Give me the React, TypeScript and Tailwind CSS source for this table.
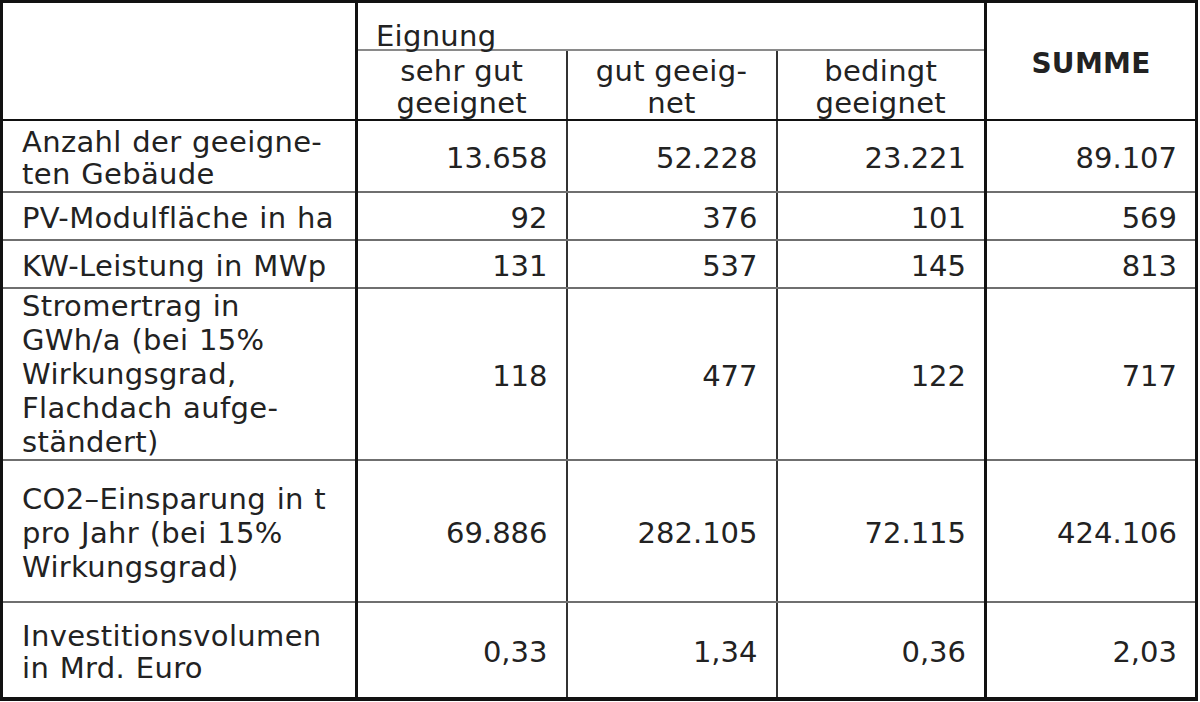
import React from 'react';

interface DataRow {
  label: React.ReactNode;
  values: string[];
  total: string;
  height: string;
  leading: string;
  pad: string;
}

const rows: DataRow[] = [
  {
    label: (
      <>
        Anzahl der geeigne-
        <br />
        ten Gebäude
      </>
    ),
    values: ['13.658', '52.228', '23.221'],
    total: '89.107',
    height: 'h-[72px]',
    leading: 'leading-[32px]',
    pad: 'pt-[5px]',
  },
  {
    label: 'PV-Modulfläche in ha',
    values: ['92', '376', '101'],
    total: '569',
    height: 'h-[48px]',
    leading: 'leading-[32px]',
    pad: 'pt-[5px]',
  },
  {
    label: 'KW-Leistung in MWp',
    values: ['131', '537', '145'],
    total: '813',
    height: 'h-[48px]',
    leading: 'leading-[32px]',
    pad: 'pt-[5px]',
  },
  {
    label: (
      <>
        Stromertrag in
        <br />
        GWh/a (bei 15%
        <br />
        Wirkungsgrad,
        <br />
        Flachdach aufge-
        <br />
        ständert)
      </>
    ),
    values: ['118', '477', '122'],
    total: '717',
    height: 'h-[172px]',
    leading: 'leading-[34px]',
    pad: 'pt-0',
  },
  {
    label: (
      <>
        CO2–Einsparung in t
        <br />
        pro Jahr (bei 15%
        <br />
        Wirkungsgrad)
      </>
    ),
    values: ['69.886', '282.105', '72.115'],
    total: '424.106',
    height: 'h-[142px]',
    leading: 'leading-[34px]',
    pad: 'pt-[5px]',
  },
  {
    label: (
      <>
        Investitionsvolumen
        <br />
        in Mrd. Euro
      </>
    ),
    values: ['0,33', '1,34', '0,36'],
    total: '2,03',
    height: 'h-[97px]',
    leading: 'leading-[32px]',
    pad: 'pt-[5px]',
  },
];

export default function App() {
  return (
    <div className="w-[1200px] h-[702px] bg-white overflow-hidden">
      <table className="w-[1198px] table-fixed border-collapse border-[3px] border-b-4 border-[#111] text-[29px] text-[#222] font-['DejaVu_Sans',Verdana,sans-serif]">
        <colgroup>
          <col className="w-[355px]" />
          <col className="w-[210px]" />
          <col className="w-[210px]" />
          <col className="w-[209px]" />
          <col />
        </colgroup>
        <thead>
          <tr className="h-[48px]">
            <th rowSpan={2} className="border-r-[3px] border-b-2 border-r-[#111] border-b-[#111]"></th>
            <th
              colSpan={3}
              className="border-b-2 border-b-[#8a8a8a] pl-[18px] pb-0 text-left align-bottom font-normal leading-[26px] tracking-[0.3px]"
            >
              Eignung
            </th>
            <th
              rowSpan={2}
              className="border-l-[3px] border-b-2 border-l-[#111] border-b-[#111] text-center align-middle font-bold text-[28px] leading-[32px] pt-[6px] tracking-[0.3px]"
            >
              SUMME
            </th>
          </tr>
          <tr className="h-[70px]">
            <th className="border-r-2 border-b-2 border-r-[#333] border-b-[#111] text-center align-middle font-normal leading-[32px] pt-[4px] tracking-[0.3px]">
              sehr gut
              <br />
              geeignet
            </th>
            <th className="border-r-2 border-b-2 border-r-[#333] border-b-[#111] text-center align-middle font-normal leading-[32px] pt-[4px] tracking-[0.3px]">
              gut geeig-
              <br />
              net
            </th>
            <th className="border-b-2 border-b-[#111] text-center align-middle font-normal leading-[32px] pt-[4px] tracking-[0.3px]">
              bedingt
              <br />
              geeignet
            </th>
          </tr>
        </thead>
        <tbody>
          {rows.map((row, i) => (
            <tr key={i} className={row.height}>
              <td
                className={`border-r-[3px] border-b-2 border-r-[#111] border-b-[#6f6f6f] pl-[19px] pr-1 align-middle whitespace-nowrap tracking-[0.35px] [word-spacing:1px] ${row.pad} ${row.leading}`}
              >
                {row.label}
              </td>
              {row.values.map((v, j) => (
                <td
                  key={j}
                  className="border-r-2 border-b-2 border-r-[#333] border-b-[#6f6f6f] pr-[18px] pt-[4px] text-right align-middle leading-[32px]"
                >
                  {v}
                </td>
              ))}
              <td className="border-l-[3px] border-b-2 border-l-[#111] border-b-[#6f6f6f] pr-[18px] pt-[4px] text-right align-middle leading-[32px]">
                {row.total}
              </td>
            </tr>
          ))}
        </tbody>
      </table>
    </div>
  );
}
